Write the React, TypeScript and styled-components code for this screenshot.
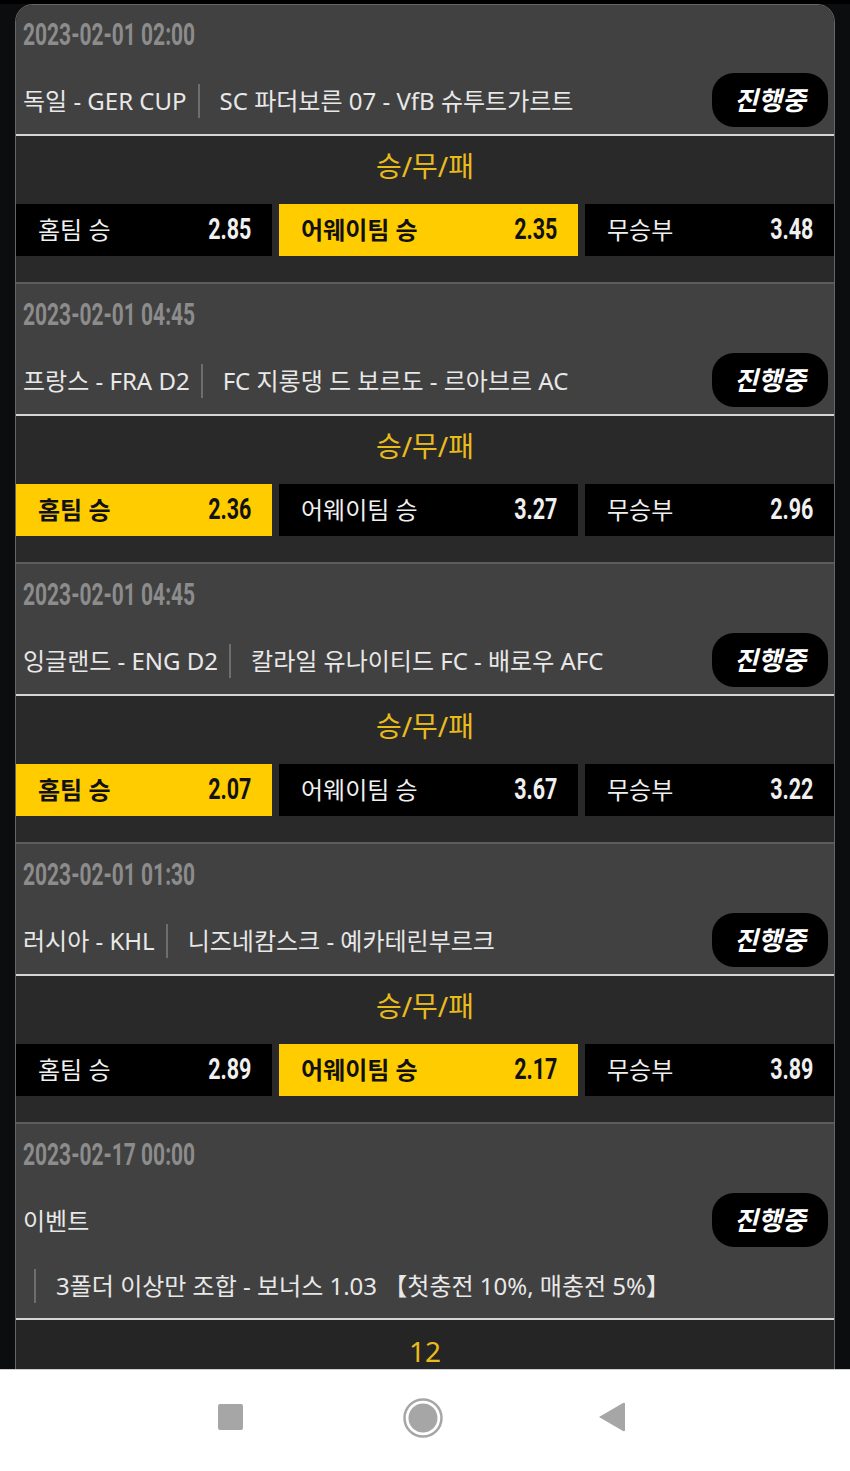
import React from "react";
import styled, { createGlobalStyle } from "styled-components";

const Global = createGlobalStyle`
  html, body { margin: 0; padding: 0; background: #fff; }
  * { box-sizing: border-box; }
`;
const KR = `"Noto Sans", "Noto Sans CJK KR", sans-serif`;

const Screen = styled.div`
  width: 850px; height: 1471px; display: flex; flex-direction: column; overflow: hidden;
  font-family: ${KR};
`;
const Viewport = styled.main`
  height: 1369px; flex: none; overflow: hidden; background: #0c0d0f;
  border-top: 4px solid #000; padding: 0 15px;
`;
const List = styled.div`
  border: 1px solid #666; border-bottom: 0; border-radius: 18px 18px 0 0; overflow: hidden;
`;
const Block = styled.section`
  & + & { border-top: 2px solid #5c5c5c; }
`;
const Head = styled.div<{ $first?: boolean }>`
  background: #414141; padding: ${p => (p.$first ? 13 : 14)}px 6px 7px 7px;
  display: flex; flex-direction: column;
`;
const DateText = styled.div`
  height: 34px; color: #8c8c8c; font: 700 31px/34px Roboto, sans-serif;
  transform: scaleX(0.677); transform-origin: left center; white-space: nowrap;
`;
const LeagueRow = styled.div`
  display: flex; align-items: center; justify-content: space-between; margin-top: 21px; height: 54px;
`;
const MatchLine = styled.div`
  display: flex; align-items: center; color: #e8e8e8; font-size: 24px; line-height: 34px; white-space: nowrap;
  padding-top: 2px;
`;
const League = styled.span<{ $divided?: boolean }>`
  ${p => p.$divided ? "border-right: 2px solid #6e6e6e; padding-right: 11px; margin-right: 20px;" : ""}
`;
const Pill = styled.div`
  width: 116px; height: 54px; border-radius: 22px; background: #000; color: #fff;
  display: flex; align-items: center; justify-content: center; padding-bottom: 3px;
  font-size: 26px; font-weight: 700; font-style: italic;
`;
const Note = styled.div`
  margin: 22px 0 8px 11px; border-left: 2px solid #6e6e6e; padding-left: 20px; height: 34px;
  color: #e8e8e8; font-size: 24px; line-height: 34px; white-space: nowrap;
`;
const Market = styled.div`
  background: #292929; border-top: 2px solid #d6d6d6; height: 148px; padding-top: 10px;
`;
const MarketTitle = styled.div`
  text-align: center; color: #e9bc1c; font-size: 28px; line-height: 40px;
`;
const OddsGrid = styled.div`
  display: grid; grid-template-columns: 256px 299px 249px; column-gap: 7px; margin-top: 18px;
`;
const Odd = styled.div<{ $on?: boolean }>`
  height: 52px; display: flex; align-items: center; justify-content: space-between; padding: 0 21px 0 22px;
  background: ${p => (p.$on ? "#ffcc00" : "#000")}; color: ${p => (p.$on ? "#111" : "#f0f0f0")};
`;
const OddLabel = styled.span<{ $on?: boolean }>`
  font-size: 24px; font-weight: ${p => (p.$on ? 700 : 400)}; padding-bottom: 3px;
`;
const OddValue = styled.span`
  font: 700 29px/50px Roboto, sans-serif; display: inline-block;
  transform: scaleX(0.74); transform-origin: right center; padding-bottom: 2px;
`;
const Footer = styled.div`
  background: #252525; border-top: 2px solid #d6d6d6; height: 60px; text-align: center;
  color: #e9bc1c; font-size: 28px; line-height: 62px;
`;
const NavBar = styled.nav`
  height: 102px; flex: none; background: #fff; border-top: 1px solid #cfcfcf;
  position: relative; display: block;
`;
const NavIcon = styled.svg<{ $left: number; $top?: number }>`
  position: absolute; top: ${p => p.$top ?? 28}px; left: ${p => p.$left}px;
`;

type Row = { date: string; league: string; match: string; on: 0 | 1; odds: [string, string, string] };
const rows: Row[] = [
  { date: "2023-02-01 02:00", league: "독일 - GER CUP", match: "SC 파더보른 07 - VfB 슈투트가르트", on: 1, odds: ["2.85", "2.35", "3.48"] },
  { date: "2023-02-01 04:45", league: "프랑스 - FRA D2", match: "FC 지롱댕 드 보르도 - 르아브르 AC", on: 0, odds: ["2.36", "3.27", "2.96"] },
  { date: "2023-02-01 04:45", league: "잉글랜드 - ENG D2", match: "칼라일 유나이티드 FC - 배로우 AFC", on: 0, odds: ["2.07", "3.67", "3.22"] },
  { date: "2023-02-01 01:30", league: "러시아 - KHL", match: "니즈네캄스크 - 예카테린부르크", on: 1, odds: ["2.89", "2.17", "3.89"] },
];
const labels = ["홈팀 승", "어웨이팀 승", "무승부"];

export default function App() {
  return (
    <Screen>
      <Global />
      <Viewport>
        <List>
          {rows.map((r, i) => (
            <Block key={i}>
              <Head $first={i === 0}>
                <DateText>{r.date}</DateText>
                <LeagueRow>
                  <MatchLine>
                    <League $divided>{r.league}</League>
                    <span>{r.match}</span>
                  </MatchLine>
                  <Pill>진행중</Pill>
                </LeagueRow>
              </Head>
              <Market>
                <MarketTitle>승/무/패</MarketTitle>
                <OddsGrid>
                  {labels.map((l, k) => (
                    <Odd key={l} $on={k === r.on}>
                      <OddLabel $on={k === r.on}>{l}</OddLabel>
                      <OddValue>{r.odds[k]}</OddValue>
                    </Odd>
                  ))}
                </OddsGrid>
              </Market>
            </Block>
          ))}
          <Block>
            <Head>
              <DateText>2023-02-17 00:00</DateText>
              <LeagueRow>
                <MatchLine><League>이벤트</League></MatchLine>
                <Pill>진행중</Pill>
              </LeagueRow>
              <Note>3폴더 이상만 조합 - 보너스 1.03 【첫충전 10%, 매충전 5%】</Note>
            </Head>
            <Footer>12</Footer>
          </Block>
        </List>
      </Viewport>
      <NavBar>
        <NavIcon $left={217} width="28" height="34" viewBox="0 0 28 34"><rect x="1" y="6" width="25" height="26" rx="2" fill="#a6a6a6" /></NavIcon>
        <NavIcon $left={402} $top={27} width="42" height="42" viewBox="0 0 42 42"><circle cx="21" cy="21" r="18.5" fill="none" stroke="#a6a6a6" strokeWidth="2.5" /><circle cx="21" cy="21" r="14.5" fill="#a6a6a6" /></NavIcon>
        <NavIcon $left={596} width="32" height="36" viewBox="0 0 32 36"><path d="M3 19 L27 5 Q29 4 29 6 V32 Q29 34 27 33 Z" fill="#a6a6a6" /></NavIcon>
      </NavBar>
    </Screen>
  );
}
